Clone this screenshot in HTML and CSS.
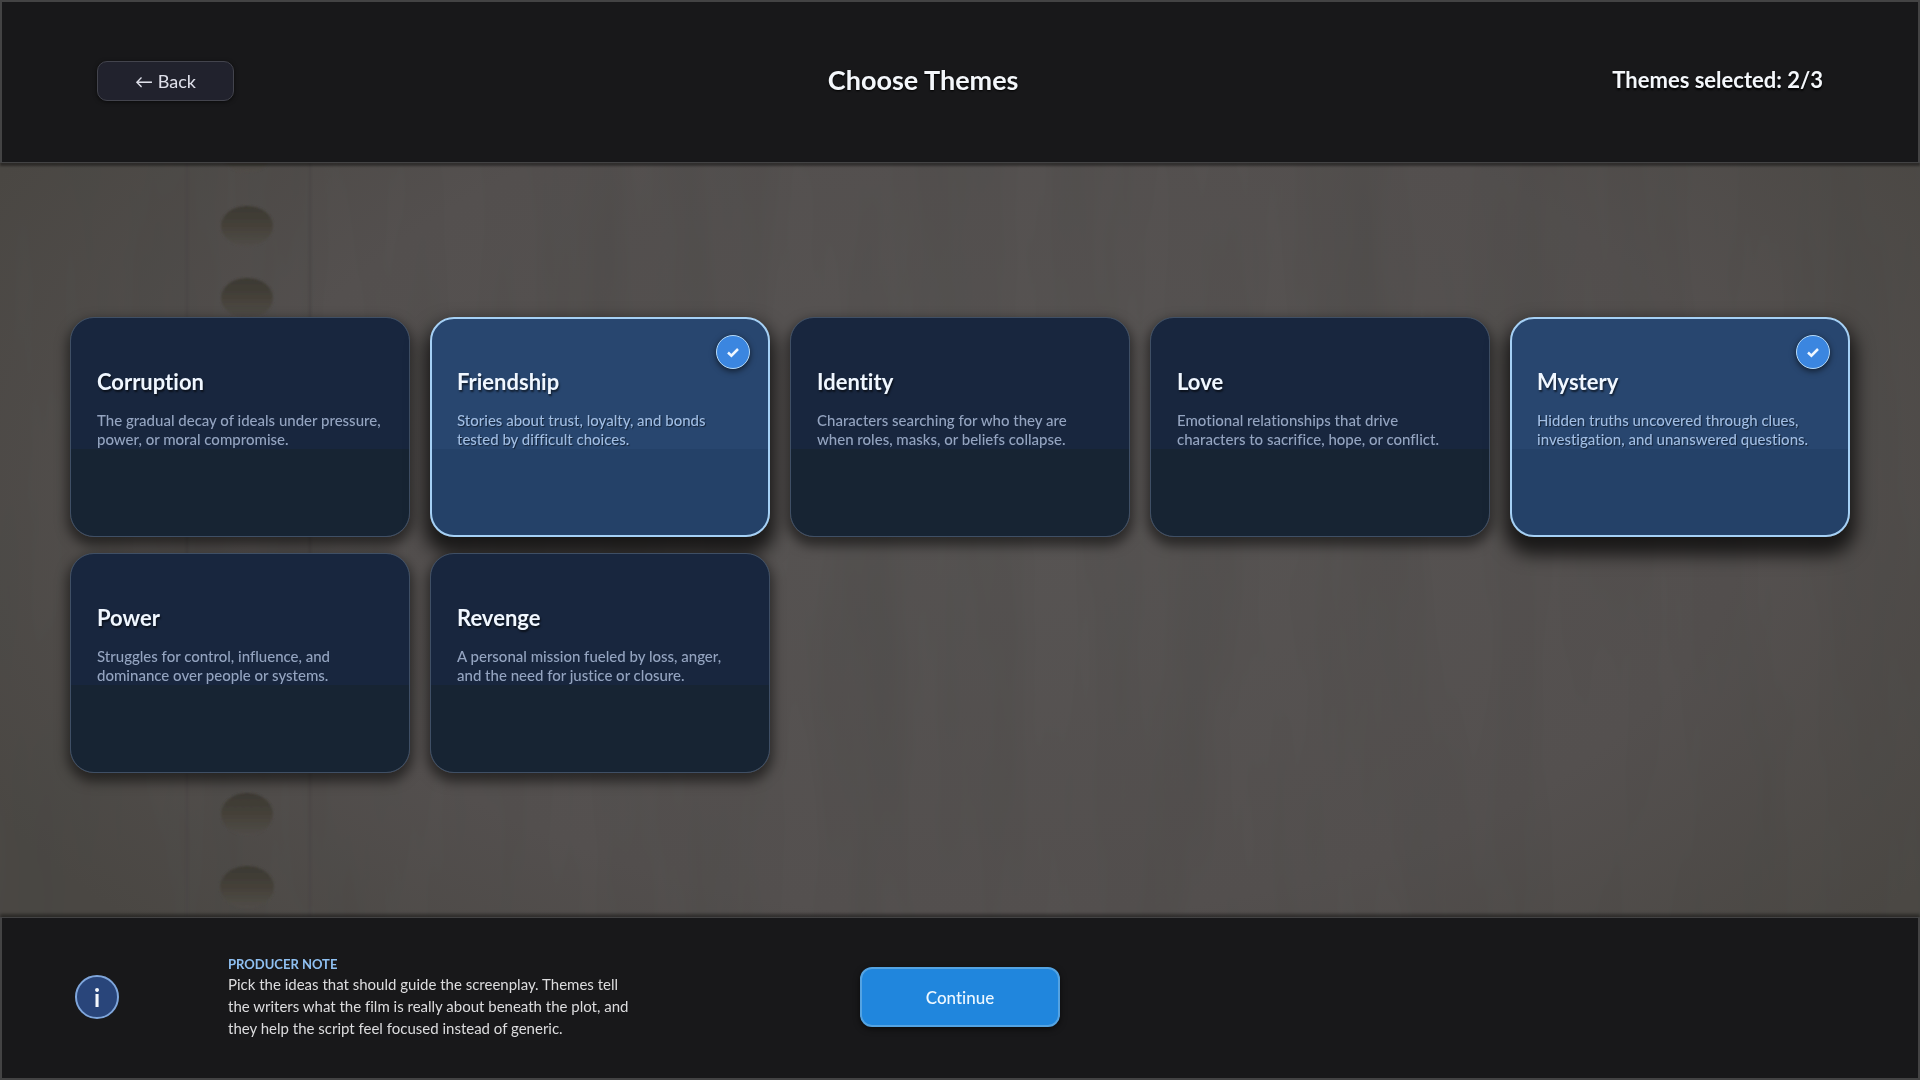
FILE: index.html
```
<!DOCTYPE html>
<html lang="en">
<head>
    <meta charset="UTF-8">
    <meta name="viewport" content="width=device-width, initial-scale=1">
    <title>Choose Themes</title>
    <link rel="stylesheet" href="styles.css">
</head>
<body>
<svg class="paper" viewBox="0 0 1920 1080" preserveAspectRatio="xMinYMin slice" aria-hidden="true">
    <defs>
        <radialGradient id="shade" cx="52%" cy="46%" r="60%">
            <stop offset="0" stop-color="#575453"/>
            <stop offset="0.65" stop-color="#54504f"/>
            <stop offset="1" stop-color="#4b4844"/>
        </radialGradient>
        <linearGradient id="hole" x1="0" y1="0" x2="0" y2="1">
            <stop offset="0" stop-color="#3c3933"/>
            <stop offset="0.5" stop-color="#454139"/>
            <stop offset="1" stop-color="#504c48"/>
        </linearGradient>
        <filter id="soft"><feGaussianBlur stdDeviation="1"/></filter>
        <filter id="fibre" x="0" y="0" width="100%" height="100%" color-interpolation-filters="sRGB">
            <feTurbulence type="fractalNoise" baseFrequency="0.012 0.002" numOctaves="4" seed="7"/>
            <feColorMatrix values="0 0 0 0 0.25  0 0 0 0 0.25  0 0 0 0 0.24  0.4 0 0 0 -0.12"/>
        </filter>
    </defs>
    <rect width="1920" height="1080" fill="url(#shade)"/>
    <rect width="1920" height="1080" filter="url(#fibre)"/>
    <!-- punched margin -->
    <g fill="#4a4745" filter="url(#soft)">
        <rect x="186" y="0" width="2" height="1080"/>
        <rect x="309" y="0" width="2" height="1080"/>
    </g>
    <g fill="url(#hole)" filter="url(#soft)">
        <ellipse cx="247" cy="152" rx="26" ry="20"/>
        <ellipse cx="247" cy="226" rx="26" ry="20"/>
        <ellipse cx="247" cy="298" rx="26" ry="20"/>
        <ellipse cx="247" cy="814" rx="26" ry="21"/>
        <ellipse cx="247" cy="887" rx="27" ry="21"/>
    </g>
</svg>

<header class="bar top-bar">
    <button type="button" class="back">← Back</button>
    <h1>Choose Themes</h1>
    <p class="counter">Themes selected: 2/3</p>
</header>

<main class="themes">
    <button type="button" class="card" aria-pressed="false">
        <span class="card-title">Corruption</span>
        <span class="card-text">The gradual decay of ideals under pressure, power, or moral compromise.</span>
    </button>
    <button type="button" class="card selected" aria-pressed="true">
        <span class="card-title">Friendship</span>
        <span class="card-text">Stories about trust, loyalty, and bonds tested by difficult choices.</span>
        <span class="check"><svg viewBox="0 0 16 16"><path d="M3 8.5l3.4 3.2L13 5"/></svg></span>
    </button>
    <button type="button" class="card" aria-pressed="false">
        <span class="card-title">Identity</span>
        <span class="card-text">Characters searching for who they are when roles, masks, or beliefs collapse.</span>
    </button>
    <button type="button" class="card" aria-pressed="false">
        <span class="card-title">Love</span>
        <span class="card-text">Emotional relationships that drive characters to sacrifice, hope, or conflict.</span>
    </button>
    <button type="button" class="card selected" aria-pressed="true">
        <span class="card-title">Mystery</span>
        <span class="card-text">Hidden truths uncovered through clues, investigation, and unanswered questions.</span>
        <span class="check"><svg viewBox="0 0 16 16"><path d="M3 8.5l3.4 3.2L13 5"/></svg></span>
    </button>
    <button type="button" class="card" aria-pressed="false">
        <span class="card-title">Power</span>
        <span class="card-text">Struggles for control, influence, and dominance over people or systems.</span>
    </button>
    <button type="button" class="card" aria-pressed="false">
        <span class="card-title">Revenge</span>
        <span class="card-text">A personal mission fueled by loss, anger, and the need for justice or closure.</span>
    </button>
</main>

<footer class="bar bottom-bar">
    <div class="note">
        <span class="info">i</span>
        <div class="note-body">
            <h2>PRODUCER NOTE</h2>
            <p>Pick the ideas that should guide the screenplay. Themes tell the writers what the film is really about beneath the plot, and they help the script feel focused instead of generic.</p>
        </div>
    </div>
    <button type="button" class="continue">Continue</button>
</footer>
</body>
</html>
```

FILE: styles.css
```
* {
    box-sizing: border-box;
}
body, h1, h2, p {
    margin: 0;
}
body {
    display: flex;
    flex-direction: column;
    min-height: 100vh;
    background: #53504e;
    color: #f4f7fb;
    font-family: Lato, "Open Sans", sans-serif;
    font-variant-ligatures: none;
}
button {
    font-family: inherit;
    font-variant-ligatures: inherit;
    color: inherit;
    cursor: pointer;
}
.paper {
    position: fixed;
    top: 0;
    left: 0;
    width: 100%;
    height: 100%;
    z-index: -1;
}

/* Bars */
.bar {
    min-height: 163px;
    background: #18181a;
    border: 2px solid #434344;
}
.top-bar {
    display: flex;
    align-items: center;
    justify-content: space-between;
    padding: 0 95px 2px;
    border-bottom-width: 1px;
    box-shadow: 0 3px 2px rgba(0, 0, 0, .4);
}
.top-bar h1,
.counter {
    padding-bottom: 3px;
    line-height: 36px;
}
.top-bar h1 {
    font-size: 27px;
    text-shadow: 0 1px 2px #000;
}
.back {
    width: 137px;
    height: 40px;
    padding: 0;
    font-size: 18px;
    color: #dfe0ea;
    background: #21222d;
    border: 1px solid #43444d;
    border-radius: 10px;
    box-shadow: 0 1px 4px rgba(0, 0, 0, .6);
}
.counter {
    font-size: 22px;
    font-weight: bold;
    text-shadow: 0 2px 2px #000;
}

/* Theme cards */
.themes {
    flex: 1;
    display: grid;
    grid-template-columns: repeat(5, 1fr);
    grid-auto-rows: 220px;
    align-content: center;
    gap: 16px 20px;
    padding: 10px 70px 0;
}
.card {
    position: relative;
    display: flex;
    flex-direction: column;
    justify-content: flex-start;
    gap: 15px;
    padding: 50px 26px 20px;
    text-align: left;
    background: linear-gradient(#18263e 60%, #172433 60%);
    border: 1px solid #3f4f65;
    border-radius: 24px;
    box-shadow: 0 6px 12px 3px rgba(0, 0, 0, .5);
}
.card-title {
    font-size: 22px;
    line-height: 28px;
    font-weight: bold;
    color: #f0f7ff;
    text-shadow: 1px 2px 2px rgba(0, 0, 0, .6);
}
.card-text {
    font-size: 15px;
    line-height: 19px;
    font-weight: 500;
    color: #94a4c0;
}
.selected {
    padding: 49px 25px 19px;
    background: linear-gradient(#28466f 60%, #244168 60%);
    border: 2px solid #a5d0f5;
    box-shadow: 0 12px 18px 6px rgba(0, 0, 0, .7);
}
.selected .card-text {
    color: #a0bde3;
    text-shadow: 1px 1px 1px rgba(0, 0, 0, .5);
}
.check {
    position: absolute;
    top: 16px;
    right: 18px;
    display: flex;
    align-items: center;
    justify-content: center;
    width: 34px;
    height: 34px;
    background: #3b86e0;
    border: 1px solid #b5daf8;
    border-radius: 50%;
    box-shadow: 0 2px 6px rgba(0, 0, 0, .6);
}
.check svg {
    width: 16px;
    height: 16px;
    fill: none;
    stroke: #f0f7ff;
    stroke-width: 2.5;
}

/* Footer */
.bottom-bar {
    display: grid;
    grid-template-columns: 1fr 200px 1fr;
    align-items: center;
    padding: 0 73px 2px;
    border-top-width: 1px;
    box-shadow: 0 -3px 3px rgba(0, 0, 0, .4);
}
.note {
    display: flex;
    align-items: center;
    gap: 109px;
}
.info {
    display: flex;
    align-items: center;
    justify-content: center;
    width: 44px;
    height: 44px;
    font-size: 24px;
    font-weight: bold;
    background: #29457a;
    border: 2px solid #7fa6dc;
    border-radius: 50%;
}
.note-body {
    width: 412px;
}
.note h2 {
    font-size: 13px;
    line-height: 18px;
    color: #8fc0f2;
}
.note p {
    font-size: 15px;
    line-height: 22px;
    color: #dcdcde;
}
.continue {
    height: 60px;
    font-size: 17px;
    font-weight: 500;
    color: #eef8ff;
    background: #2086dd;
    border: 2px solid #54a3e2;
    border-radius: 12px;
    box-shadow: 0 2px 6px rgba(0, 0, 0, .6);
}
```
